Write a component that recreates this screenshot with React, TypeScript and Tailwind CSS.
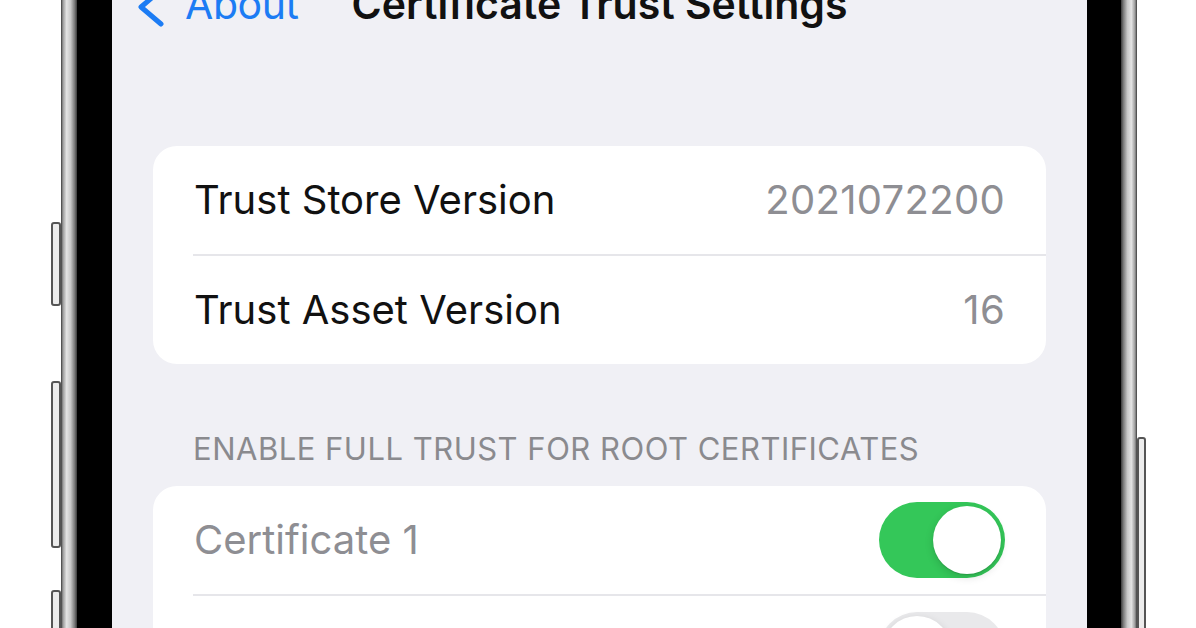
import React from "react";

function Toggle({ on }: { on: boolean }) {
  return (
    <div
      className={`flex h-[76px] w-[126px] shrink-0 items-center rounded-full px-[4px] ${
        on ? "justify-end bg-[#34c759]" : "justify-start bg-[#e9e9eb]"
      }`}
    >
      <div className="h-[68px] w-[68px] rounded-full bg-white shadow-[0_3px_8px_rgba(0,0,0,0.15),0_1px_1px_rgba(0,0,0,0.12)]" />
    </div>
  );
}

function Row({ label, value, muted, toggle }: { label: string; value?: string; muted?: boolean; toggle?: boolean | null }) {
  return (
    <div className="flex h-[108px] shrink-0 items-center justify-between pl-[41px] pr-[41px]">
      <span className={`text-[40px] ${muted ? "text-[#8e8e93]" : "text-[#111]"}`}>{label}</span>
      {value && <span className="text-[40px] tracking-[0.3px] text-[#8e8e93]">{value}</span>}
      {toggle != null && <Toggle on={toggle} />}
    </div>
  );
}

function Divider() {
  return <div className="ml-[40px] h-[2px] shrink-0 bg-[#e6e6ea]" />;
}

function SideButton({ h, mt }: { h: string; mt: string }) {
  return <div className={`${h} ${mt} w-[10px] shrink-0 rounded-[3px] border-2 border-[#555] bg-[#ececec]`} />;
}

export default function App() {
  return (
    <div className="flex h-[628px] w-[1196px] overflow-hidden bg-white font-['Inter',sans-serif]">
      {/* left side buttons */}
      <div className="ml-[51px] flex w-[10px] flex-col">
        <SideButton h="h-[84px]" mt="mt-[222px]" />
        <SideButton h="h-[167px]" mt="mt-[75px]" />
        <SideButton h="h-[120px]" mt="mt-[42px]" />
      </div>
      {/* frame + bezel */}
      <div className="w-[16px] bg-[linear-gradient(90deg,#3a3a3a_0%,#9a9a9a_12%,#e4e4e4_35%,#c8c8c8_60%,#7a7a7a_85%,#3a3a3a_100%)]" />
      <div className="w-[35px] bg-black" />

      {/* screen */}
      <div className="flex w-[975px] flex-col bg-[#f0f0f5]">
        <div className="-mt-[26px] grid h-[56px] shrink-0 grid-cols-[1fr_auto_1fr] items-center px-[23px]">
          <div className="flex items-center gap-[20px] text-[#1c7cf4]">
            <svg width="30" height="40" viewBox="0 0 30 40" className="mt-[4px]">
              <polyline points="26,3 6,20 26,37" fill="none" stroke="currentColor" strokeWidth="5" strokeLinecap="round" strokeLinejoin="round" />
            </svg>
            <span className="text-[41px] tracking-[-0.4px]">About</span>
          </div>
          <span className="text-[41px] font-semibold text-[#111]">Certificate Trust Settings</span>
          <div />
        </div>

        <div className="mx-[41px] mt-[116px] shrink-0 overflow-hidden rounded-[24px] bg-white">
          <Row label="Trust Store Version" value="2021072200" />
          <Divider />
          <Row label="Trust Asset Version" value="16" />
        </div>

        <div className="mt-[62px] shrink-0 px-[81px] text-[31px] tracking-[0.5px] text-[#8a8a8e]">
          ENABLE FULL TRUST FOR ROOT CERTIFICATES
        </div>

        <div className="mx-[41px] mt-[13px] shrink-0 overflow-hidden rounded-[24px] bg-white">
          <Row label="Certificate 1" muted toggle={true} />
          <Divider />
          <Row label="Certificate 2" muted toggle={false} />
        </div>
      </div>

      {/* right bezel + frame */}
      <div className="w-[34px] bg-black" />
      <div className="w-[16px] bg-[linear-gradient(90deg,#3a3a3a_0%,#7a7a7a_15%,#c8c8c8_40%,#e4e4e4_65%,#9a9a9a_88%,#3a3a3a_100%)]" />
      <div className="flex w-[9px] flex-col">
        <div className="mt-[437px] h-[260px] w-[9px] shrink-0 rounded-[3px] border-2 border-[#555] bg-[#ececec]" />
      </div>
    </div>
  );
}
